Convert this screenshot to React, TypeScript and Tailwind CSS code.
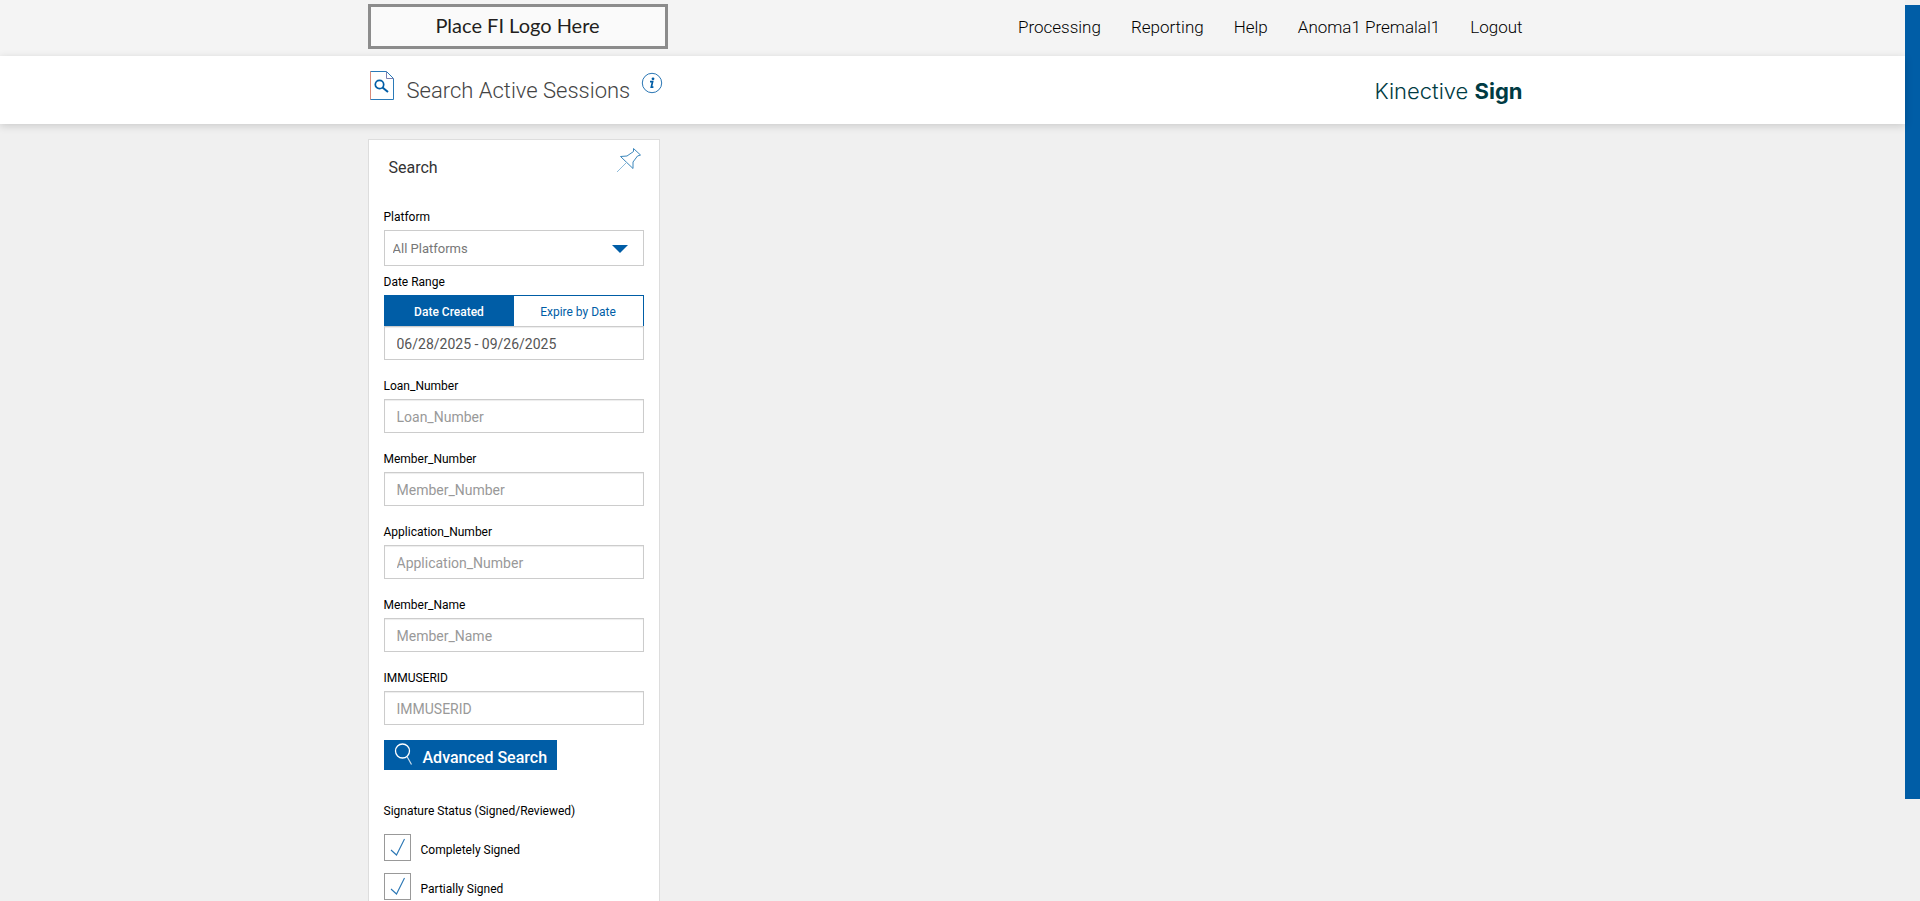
import { useState } from 'react';

const navItems = ['Processing', 'Reporting', 'Help', 'Anoma1 Premalal1', 'Logout'];

const textFields = ['Loan_Number', 'Member_Number', 'Application_Number', 'Member_Name', 'IMMUSERID'];

const statuses = ['Completely Signed', 'Partially Signed'];

function TopBar() {
  return (
    <div className="bg-[#f4f4f4]">
      <div className="max-w-[1170px] mx-auto h-14 pt-1 pr-[15px] flex items-start justify-between">
        <div className="w-[300px] h-[45px] pb-1 border-3 border-[#8c8c8c] bg-[#fafafa] flex items-center justify-center font-[Lato] text-xl leading-6 text-[#231f20]">
          Place FI Logo Here
        </div>
        <nav className="flex gap-[30px] pt-[11px] text-[17px] leading-6 font-light text-black">
          {navItems.map((item) => (
            <a key={item} href="#">
              {item}
            </a>
          ))}
        </nav>
      </div>
    </div>
  );
}

function TitleBar() {
  return (
    <header className="relative bg-white shadow-[0_2px_8px_rgba(0,0,0,0.16)]">
      <div className="max-w-[1170px] mx-auto h-[68px] pr-[15px] flex items-start justify-between">
        <div className="flex items-start">
          <svg className="mt-[14px] ml-px" width="26" height="31" viewBox="0 0 26 31" fill="none">
            <path d="M1.5 1.5H17.5L24.5 8.5V29.5H1.5Z" stroke="#2a7ab8" />
            <path d="M1.5 1.5V29.5" stroke="#d98a78" />
            <path d="M17.5 1.5V8.5H24.5" stroke="#7a7fb0" />
            <circle cx="10.5" cy="14.5" r="4.2" stroke="#005da6" strokeWidth="1.7" />
            <path d="M13.5 17.5L19 22" stroke="#005da6" strokeWidth="2" />
          </svg>
          <h1 className="ml-3 mt-[19px] text-[22px] leading-8 font-light text-[#444]">Search Active Sessions</h1>
          <a href="#" aria-label="Information" className="ml-[11px] mt-4">
            <svg width="22" height="22" viewBox="0 0 22 22" fill="none">
              <circle cx="11" cy="11" r="9.7" stroke="#2a76b4" />
              <circle cx="12" cy="6.8" r="1.4" fill="#005da6" />
              <path d="M9 9.7H11.6L10.3 15.2H12.4" stroke="#005da6" strokeWidth="1.7" />
            </svg>
          </a>
        </div>
        <div className="mt-[19px] font-[Inter] text-[22px] leading-8 font-light text-[#003b43]">
          Kinective <span className="font-bold">Sign</span>
        </div>
      </div>
    </header>
  );
}

function TextField({ name }: { name: string }) {
  return (
    <div className="mb-[15px]">
      <label htmlFor={name} className="block mb-0.5 leading-[22px]">
        {name}
      </label>
      <input
        id={name}
        type="text"
        placeholder={name}
        className="block w-full h-[34px] px-3 pt-0.5 border border-[#ccc] bg-white text-sm text-[#555] placeholder:text-[#999] shadow-[inset_0_1px_1px_rgba(0,0,0,0.075)]"
      />
    </div>
  );
}

function StatusCheckbox({ label }: { label: string }) {
  return (
    <label className="flex items-center h-[27px] mb-3">
      <span className="relative block size-[27px] mr-[10px]">
        <input type="checkbox" defaultChecked className="peer block appearance-none size-[27px] border border-[#999] bg-white" />
        <svg
          className="absolute inset-0 pointer-events-none opacity-0 peer-checked:opacity-100"
          width="27"
          height="27"
          viewBox="0 0 27 27"
          fill="none"
        >
          <path d="M7 16L12.5 21L20.5 5" stroke="#2a76b4" strokeWidth="1.1" />
        </svg>
      </span>
      <span className="pt-1">{label}</span>
    </label>
  );
}

function SearchPanel() {
  const [tab, setTab] = useState('created');
  const active = 'pt-0.5 bg-[#005da6] text-white font-medium';
  const idle = 'pt-0.5 bg-white text-[#005da6]';

  return (
    <aside className="w-[292px] mt-[15px] px-[15px] pb-10 border border-[#ddd] bg-white text-xs text-black">
      <div className="flex items-start justify-between h-[66px] pl-[5px]">
        <h2 className="pt-4 text-base text-[#333]">Search</h2>
        <button type="button" aria-label="Pin search" className="mt-[7px] mr-[2px]">
          <svg width="26" height="26" viewBox="0 0 26 26" fill="none">
            <path
              d="M17.5 1.5L24.5 8L21.5 9L17 15L17 21.5L4.5 9.5L11 9L17.5 4.5Z"
              stroke="#3a86bb"
            />
            <path d="M10.5 15.5L1 25" stroke="#8fbbda" />
          </svg>
        </button>
      </div>

      <label htmlFor="platform" className="block mb-0.5 leading-[22px]">
        Platform
      </label>
      <div className="relative mb-[5px]">
        <select
          id="platform"
          className="block w-full h-9 px-2 pt-0.5 appearance-none border border-[#ccc] bg-white text-[13px] text-[#777]"
        >
          <option>All Platforms</option>
        </select>
        <svg className="absolute right-4 top-[15px] pointer-events-none" width="16" height="8" viewBox="0 0 16 8">
          <path d="M0 0H16L8 8Z" fill="#005da6" />
        </svg>
      </div>

      <label htmlFor="dateRange" className="block mb-0.5 leading-[22px]">
        Date Range
      </label>
      <div className="grid grid-cols-2 h-[31px] border border-b-0 border-[#005da6]">
        <button type="button" onClick={() => setTab('created')} className={tab === 'created' ? active : idle}>
          Date Created
        </button>
        <button type="button" onClick={() => setTab('expire')} className={tab === 'expire' ? active : idle}>
          Expire by Date
        </button>
      </div>
      <input
        id="dateRange"
        type="text"
        defaultValue="06/28/2025 - 09/26/2025"
        className="block w-full h-[34px] px-3 pt-0.5 mb-[15px] border border-[#ccc] bg-white text-sm text-[#555] shadow-[inset_0_1px_1px_rgba(0,0,0,0.075)]"
      />

      {textFields.map((name) => (
        <TextField key={name} name={name} />
      ))}

      <button type="button" className="flex items-start h-[30px] px-[10px] bg-[#005da6] text-base font-medium text-white">
        <svg className="mt-[3px] mr-[10px]" width="19" height="23" viewBox="0 0 19 23" fill="none">
          <circle cx="8.5" cy="8" r="7" stroke="#fff" strokeWidth="1.3" />
          <path d="M13 13.5L17.5 21.5" stroke="#cfe0ee" strokeWidth="1.2" />
        </svg>
        <span className="pt-[6px]">Advanced Search</span>
      </button>

      <fieldset className="mt-[31px]">
        <legend className="mb-[13px] leading-5">Signature Status (Signed/Reviewed)</legend>
        {statuses.map((status) => (
          <StatusCheckbox key={status} label={status} />
        ))}
      </fieldset>
    </aside>
  );
}

export default function App() {
  return (
    <div className="flex h-screen overflow-hidden bg-[#f0f0f0] font-[Roboto,sans-serif]">
      <div className="flex-1">
        <TopBar />
        <TitleBar />
        <main className="max-w-[1170px] mx-auto">
          <SearchPanel />
        </main>
      </div>
      <div className="w-[15px] pt-[5px]">
        <div className="h-[88.6%] bg-[#005da6]" />
      </div>
    </div>
  );
}
